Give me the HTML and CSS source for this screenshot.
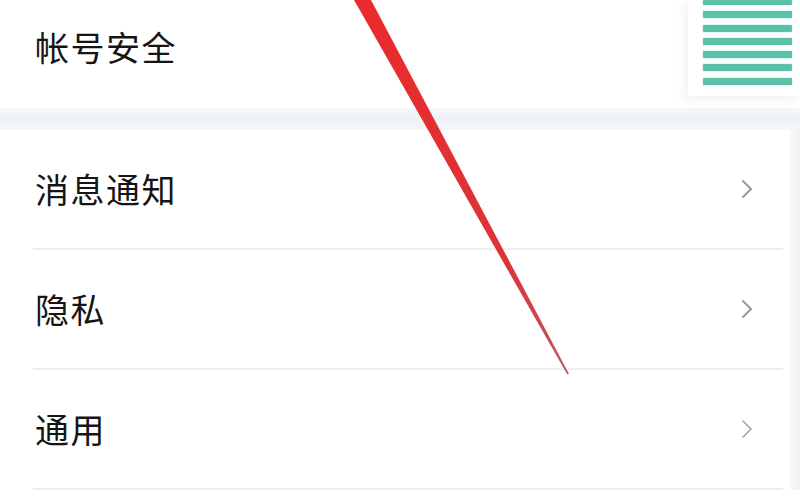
FILE: index.html
```html
<!DOCTYPE html>
<html lang="zh-CN">
<head>
<meta charset="utf-8">
<link rel="stylesheet" href="styles.css">
</head>
<body>
<div class="screen">
  <div class="top-row"><span class="label">帐号安全</span></div>
  <div class="band"></div>
  <div class="list">
    <div class="rows">
      <div class="item"><span class="label">消息通知</span><svg class="chev" viewBox="0 0 12 20" width="12" height="20"><path d="M2 2 L10 10 L2 18" fill="none" stroke="#999999" stroke-width="2" stroke-linecap="round" stroke-linejoin="round"/></svg></div>
      <div class="item"><span class="label">隐私</span><svg class="chev" viewBox="0 0 12 20" width="12" height="20"><path d="M2 2 L10 10 L2 18" fill="none" stroke="#999999" stroke-width="2" stroke-linecap="round" stroke-linejoin="round"/></svg></div>
      <div class="item"><span class="label">通用</span><svg class="chev" viewBox="0 0 12 20" width="12" height="20"><path d="M2 2 L10 10 L2 18" fill="none" stroke="#a0a0a0" stroke-width="1.6" stroke-linecap="round" stroke-linejoin="round"/></svg></div>
    </div>
    <div class="edge"></div>
  </div>

  <div class="menu-card">
    <div class="stripe first"></div><div class="stripe"></div><div class="stripe"></div><div class="stripe"></div><div class="stripe"></div><div class="stripe"></div><div class="stripe"></div>
  </div>

  <svg class="arrow" viewBox="0 0 800 500" width="800" height="500">
    <defs>
      <linearGradient id="rg" x1="0" y1="0" x2="0" y2="1">
        <stop offset="0" stop-color="#ea2a2c"/>
        <stop offset="0.7" stop-color="#dc3438"/>
        <stop offset="1" stop-color="#b85a60"/>
      </linearGradient>
    </defs>
    <polygon points="354,0 371,0 569,374 567,374" fill="url(#rg)"/>
  </svg>
</div>
</body>
</html>
```
FILE: styles.css
```css
html, body {
  margin: 0;
  padding: 0;
  background: #ffffff;
}
.screen {
  position: relative;
  width: 800px;
  height: 500px;
  overflow: hidden;
  font-family: "Noto Sans CJK SC", "Noto Sans", sans-serif;
  color: #151515;
}
.label {
  font-size: 34px;
  line-height: 1;
  letter-spacing: 1.5px;
}
.top-row {
  height: 108px;
  box-sizing: border-box;
  padding: 0 0 14px 35px;
  display: flex;
  align-items: center;
  background: #ffffff;
}
.band {
  height: 22px;
  background: linear-gradient(#f6f7f9, #eff2f5 50%, #f5f6f8);
}
.list {
  display: flex;
}
.rows {
  flex: 1;
}
.edge {
  width: 10px;
  background: linear-gradient(90deg, #f8f8f8, #f2f2f2);
}
.item {
  height: 118px;
  margin: 0 7px 0 33px;
  padding: 0 30px 0 2px;
  display: flex;
  align-items: center;
  justify-content: space-between;
  border-bottom: 2px solid #efefef;
}
.chev {
  display: block;
}
.menu-card {
  position: absolute;
  top: 0;
  left: 688px;
  width: 112px;
  height: 96px;
  background: #ffffff;
  box-shadow: -4px 4px 10px rgba(0, 0, 0, 0.06);
  box-sizing: border-box;
  padding: 0 8px 0 15px;
}
.stripe {
  height: 7px;
  margin-top: 6.3px;
  background: #5cbfa7;
  box-shadow: 0 0 0 1px #dffaf6;
  border-radius: 1px;
}
.stripe.first {
  height: 5px;
  margin-top: 0;
}
.arrow {
  position: absolute;
  top: 0;
  left: 0;
  pointer-events: none;
}
```
